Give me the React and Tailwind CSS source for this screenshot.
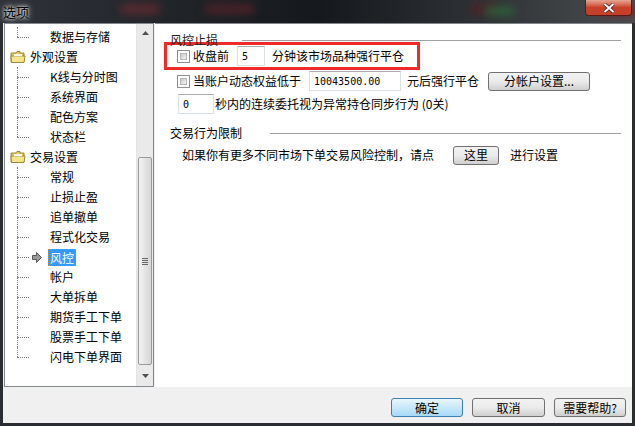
import React from "react";

const font = { fontFamily: '"Noto Sans CJK SC", "Liberation Sans", sans-serif' };

const tree = [
  { label: "数据与存储", kind: "child", last: true, top: true },
  { label: "外观设置", kind: "folder" },
  { label: "K线与分时图", kind: "child" },
  { label: "系统界面", kind: "child" },
  { label: "配色方案", kind: "child" },
  { label: "状态栏", kind: "child", last: true },
  { label: "交易设置", kind: "folder" },
  { label: "常规", kind: "child" },
  { label: "止损止盈", kind: "child" },
  { label: "追单撤单", kind: "child" },
  { label: "程式化交易", kind: "child" },
  { label: "风控", kind: "child", selected: true },
  { label: "帐户", kind: "child" },
  { label: "大单拆单", kind: "child" },
  { label: "期货手工下单", kind: "child" },
  { label: "股票手工下单", kind: "child" },
  { label: "闪电下单界面", kind: "child", last: true },
];

function Folder() {
  return (
    <svg width="16" height="14" viewBox="0 0 16 14">
      <path d="M1 3 h5 l1 -1.5 h3 v1.5 h4 v9 h-13 z" fill="#e7c95a" stroke="#8a7326" strokeWidth="0.8" />
      <path d="M1 6 h14 l-1 6.5 h-12.5 z" fill="#f7e58c" stroke="#8a7326" strokeWidth="0.8" />
      <rect x="4" y="4.2" width="8" height="2" fill="#fff" />
    </svg>
  );
}

function Arrow() {
  return (
    <svg width="10" height="11" viewBox="0 0 10 11">
      <path d="M0.5 3.5 h4 v-3 l5 5 l-5 5 v-3 h-4 z" fill="#9a9a9a" stroke="#3a3a3a" strokeWidth="0.8" />
    </svg>
  );
}

function TreeRow({ item }) {
  if (item.kind === "folder") {
    return (
      <div className="h-5 flex items-center pl-[5px] gap-[4px]">
        <Folder />
        <span>{item.label}</span>
      </div>
    );
  }
  return (
    <div className="h-5 flex items-center">
      <div className="relative w-[31px] h-5 ml-[12px]">
        <div
          className={`absolute left-0 w-0 border-l border-dotted border-[#808080] ${
            item.last ? "top-0 h-[10px]" : "top-0 h-5"
          }`}
        />
        <div className="absolute left-0 top-[10px] w-[12px] border-t border-dotted border-[#808080]" />
        {item.selected && (
          <div className="absolute left-[15px] top-[5px]">
            <Arrow />
          </div>
        )}
      </div>
      {item.selected ? (
        <span className="bg-[#3399ff] text-white px-[1px] h-[17px] leading-[15px] border border-dotted border-[#c48a2a]">
          {item.label}
        </span>
      ) : (
        <span className="px-[2px]">{item.label}</span>
      )}
    </div>
  );
}

function Checkbox() {
  return (
    <div className="w-[13px] h-[13px] border border-[#8e8f8f] bg-white p-[2px]">
      <div className="w-full h-full bg-gradient-to-br from-[#cbcbcb] to-[#f4f4f4] border border-[#b6b6b6]" />
    </div>
  );
}

function Input({ w, value }) {
  return (
    <div
      className={`${w} h-[20px] bg-white border border-[#dbdfe6] border-t-[#abadb3] flex items-center pl-[4px] text-[10px]`}
      style={{ fontFamily: '"DejaVu Sans Mono", monospace' }}
    >
      {value}
    </div>
  );
}

function Button({ children, w, primary }) {
  return (
    <div
      className={`${w} h-[19px] rounded-[3px] border flex items-center justify-center ${
        primary
          ? "border-[#3c7fb1] bg-gradient-to-b from-[#eaf6fd] to-[#a7d9f5]"
          : "border-[#707070] bg-gradient-to-b from-[#f2f2f2] via-[#ebebeb] to-[#cfcfcf]"
      }`}
    >
      {children}
    </div>
  );
}

export default function App() {
  return (
    <div className="w-[635px] h-[426px] bg-[#2a2d31] flex flex-col text-[12px] text-black overflow-hidden" style={font}>
      {/* title bar */}
      <div className="h-[23px] relative bg-gradient-to-r from-[#30343a] via-[#15181c] to-[#4a4d50] flex items-start">
        <div className="absolute left-[120px] top-[4px] w-[40px] h-[10px] rounded-full bg-[#5a2a30] blur-[4px]" />
        <div className="absolute left-[205px] top-[4px] w-[50px] h-[10px] rounded-full bg-[#4a2228] blur-[4px]" />
        <div className="absolute left-[470px] top-[4px] w-[30px] h-[10px] rounded-full bg-[#4c2228] blur-[4px]" />
        <div className="absolute left-[600px] top-[6px] w-[40px] h-[10px] rounded-full bg-[#6a2c32] blur-[4px]" />
        <div className="absolute left-[485px] top-[6px] w-[30px] h-[10px] rounded-full bg-[#2e5b3a] blur-[4px]" />
        <span className="ml-[3px] mt-[2px] text-[13px] text-black [text-shadow:0_0_6px_#ffffff,0_0_3px_#ffffff]">选项</span>
        <div className="absolute right-[3px] top-0 w-[47px] h-[16px] rounded-b-[4px] border border-[#5c1b12] border-t-0 bg-gradient-to-b from-[#e3a695] via-[#c9402a] to-[#c2412a] flex items-center justify-center">
          <svg width="12" height="10" viewBox="0 0 12 10">
            <path d="M1.5 1 L10.5 9 M10.5 1 L1.5 9" stroke="#3a1a14" strokeWidth="3.4" />
            <path d="M1.5 1 L10.5 9 M10.5 1 L1.5 9" stroke="#ffffff" strokeWidth="2" />
          </svg>
        </div>
      </div>

      {/* body */}
      <div className="flex-1 mx-[3px] mb-[3px] bg-[#f0f0f0] flex flex-col">
        <div className="flex h-[364px]">
          {/* tree */}
          <div className="w-[150px] ml-[1px] border border-[#828790] bg-white flex">
            <div className="flex-1 pt-[3px] overflow-hidden">
              {tree.map((it, i) => (
                <TreeRow key={i} item={it} />
              ))}
            </div>
            <div className="w-[17px] bg-[#eaeaea] border-l border-[#e4e4e4] flex flex-col">
              <div className="h-[17px] flex items-center justify-center">
                <svg width="7" height="4" viewBox="0 0 7 4">
                  <path d="M0 4 L3.5 0 L7 4 z" fill="#505050" />
                </svg>
              </div>
              <div className="h-[116px]" />
              <div className="h-[208px] mx-[1px] rounded-[2px] border border-[#9a9a9a] bg-gradient-to-r from-[#f3f3f3] to-[#d6d6d6] flex items-center justify-center">
                <div className="flex flex-col gap-[1px]">
                  <div className="w-[6px] h-[1px] bg-[#666]" />
                  <div className="w-[6px] h-[1px] bg-[#666]" />
                  <div className="w-[6px] h-[1px] bg-[#666]" />
                  <div className="w-[6px] h-[1px] bg-[#666]" />
                </div>
              </div>
              <div className="flex-1 flex items-center justify-center">
                <svg width="7" height="4" viewBox="0 0 7 4">
                  <path d="M0 0 L3.5 4 L7 0 z" fill="#505050" />
                </svg>
              </div>
            </div>
          </div>

          {/* right panel */}
          <div className="flex-1 ml-[1px] bg-white border-t border-[#828790] pl-[15px] pr-[11px] pt-[8px]">
            <div className="flex items-center gap-[4px] h-[16px]">
              <span className="text-[#222]">风控止损</span>
              <div className="flex-1 ml-[20px] border-t border-[#a0a0a0]" />
            </div>
            <div className="ml-[-6px] mt-[-6px] w-[256px] h-[28px] border-[3px] border-[#ee2a2a] flex items-center pl-[10px]">
              <Checkbox />
              <span className="ml-[3px]">收盘前</span>
              <div className="ml-[8px]">
                <Input w="w-[28px]" value="5" />
              </div>
              <span className="ml-[7px]">分钟该市场品种强行平仓</span>
            </div>
            <div className="flex items-center h-[22px] pl-[7px]">
              <Checkbox />
              <span className="ml-[3px]">当账户动态权益低于</span>
              <div className="ml-[8px]">
                <Input w="w-[92px]" value="10043500.00" />
              </div>
              <span className="ml-[6px]">元后强行平仓</span>
              <div className="ml-[9px]">
                <Button w="w-[102px]">分帐户设置...</Button>
              </div>
            </div>
            <div className="flex items-center h-[22px] mt-[1px] pl-[8px]">
              <Input w="w-[36px]" value="0" />
              <span className="ml-[1px]">秒内的连续委托视为异常持仓同步行为 (0关)</span>
            </div>
            <div className="flex items-center gap-[4px] mt-[10px] h-[16px]">
              <span>交易行为限制</span>
              <div className="flex-1 ml-[24px] border-t border-[#a0a0a0]" />
            </div>
            <div className="flex items-center h-[22px] mt-[3px] pl-[12px]">
              <span>如果你有更多不同市场下单交易风险控制，请点</span>
              <div className="ml-[19px]">
                <Button w="w-[46px]">这里</Button>
              </div>
              <span className="ml-[11px]">进行设置</span>
            </div>
          </div>
        </div>

        {/* buttons */}
        <div className="flex-1 flex items-start justify-end gap-[9px] pt-[11px] pr-[6px]">
          <Button w="w-[72px]" primary>确定</Button>
          <Button w="w-[73px]">取消</Button>
          <Button w="w-[72px]">需要帮助?</Button>
        </div>
      </div>
    </div>
  );
}
